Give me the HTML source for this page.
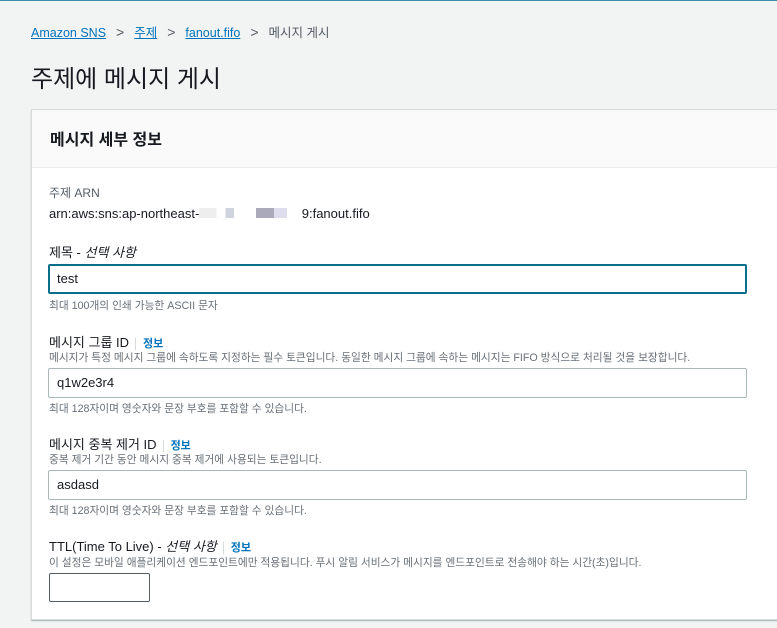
<!DOCTYPE html><html><head><meta charset="utf-8"><style>
*{box-sizing:border-box;margin:0;padding:0}
body{width:777px;height:628px;overflow:hidden;background:#f2f3f3;font-family:"Liberation Sans","Noto Sans CJK KR",sans-serif;color:#16191f;position:relative;border-top:1px solid #3b8ea8}
.a{position:absolute;white-space:nowrap}
.bc{top:21px;left:31px;font-size:12.5px;color:#545b64}
.bc a{color:#0073bb;text-decoration:underline;text-decoration-color:#0073bb}
.bc span.s{margin:0 10px;color:#545b64;font-size:14px}
h1{position:absolute;top:58px;left:31px;font-size:24px;font-weight:400;color:#16191f}
.card{position:absolute;left:31px;top:108px;width:760px;height:511px;background:#fff;border:1px solid #d5dbdb;box-shadow:0 1px 1px rgba(0,28,36,.3)}
.hd{height:58px;background:#fafafa;border-bottom:1px solid #eaeded;padding:16px 18px;font-size:16px;font-weight:700}
.lb{font-size:13px;color:#16191f}
.d{font-size:10.7px;color:#687078}
.i{color:#0073bb;font-weight:700;border-left:1px solid #d5dbdb;padding-left:7px;margin-left:6px;font-size:11px}
.in{position:absolute;left:48px;width:699px;height:30px;border:1px solid #aab7b8;border-radius:2px;font-size:13px;padding:6px 8px;background:#fff}
</style></head><body>
<div class="a bc"><a>Amazon SNS</a><span class="s">&gt;</span><a>주제</a><span class="s">&gt;</span><a>fanout.fifo</a><span class="s">&gt;</span>메시지 게시</div>
<h1>주제에 메시지 게시</h1>
<div class="card"><div class="hd">메시지 세부 정보</div></div>
<div class="a" style="top:183px;left:49px;font-size:12px;color:#545b64">주제 ARN</div>
<div class="a" style="top:205px;left:49px;font-size:13px">arn:aws:sns:ap-northeast-<span style="display:inline-block;width:88px;height:10px;background:linear-gradient(90deg,#eee 0 20%,#fff 20% 30%,#cfd3de 30% 40%,#fff 40% 65%,#aab 65% 85%,#dde 85%)"></span>&nbsp;&nbsp;&nbsp;&nbsp;9:fanout.fifo</div>
<div class="a lb" style="top:241px;left:49px">제목 - <i>선택 사항</i></div>
<div class="in" style="top:263px;border:2px solid #0b6e8a;padding:5px 7px">test</div>
<div class="a d" style="top:297px;left:49px">최대 100개의 인쇄 가능한 ASCII 문자</div>
<div class="a lb" style="top:331px;left:49px">메시지 그룹 ID<span class="i">정보</span></div>
<div class="a d" style="top:349px;left:49px">메시지가 특정 메시지 그룹에 속하도록 지정하는 필수 토큰입니다. 동일한 메시지 그룹에 속하는 메시지는 FIFO 방식으로 처리될 것을 보장합니다.</div>
<div class="in" style="top:367px">q1w2e3r4</div>
<div class="a d" style="top:400px;left:49px">최대 128자이며 영숫자와 문장 부호를 포함할 수 있습니다.</div>
<div class="a lb" style="top:433px;left:49px">메시지 중복 제거 ID<span class="i">정보</span></div>
<div class="a d" style="top:451px;left:49px">중복 제거 기간 동안 메시지 중복 제거에 사용되는 토큰입니다.</div>
<div class="in" style="top:469px">asdasd</div>
<div class="a d" style="top:502px;left:49px">최대 128자이며 영숫자와 문장 부호를 포함할 수 있습니다.</div>
<div class="a lb" style="top:535px;left:49px">TTL(Time To Live) - <i>선택 사항</i><span class="i">정보</span></div>
<div class="a d" style="top:554px;left:49px">이 설정은 모바일 애플리케이션 엔드포인트에만 적용됩니다. 푸시 알림 서비스가 메시지를 엔드포인트로 전송해야 하는 시간(초)입니다.</div>
<div class="in" style="top:572px;left:49px;width:101px;height:29px;border-color:#545b64"></div>
</body></html>
